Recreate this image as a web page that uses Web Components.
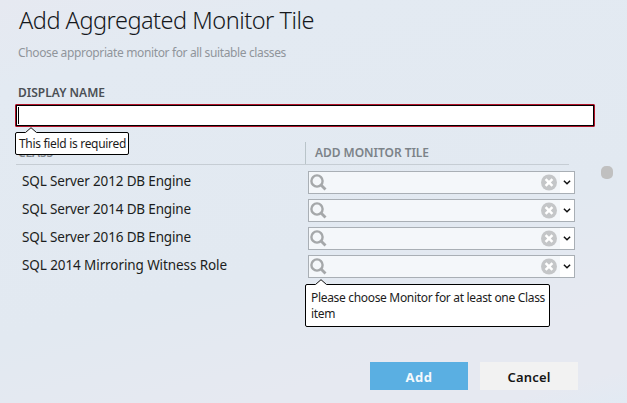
<!DOCTYPE html>
<html lang="en">
<head>
<meta charset="utf-8">
<title>Add Aggregated Monitor Tile</title>
<style>
html, body { margin: 0; height: 100%; overflow: hidden; }
body { font-family: "Noto Sans", "Open Sans", sans-serif; }
</style>
</head>
<body>
<monitor-dialog></monitor-dialog>
<script>
function mount(el, html) {
  const t = document.createElement('template');
  t.innerHTML = html;
  el.attachShadow({ mode: 'open' }).append(t.content.cloneNode(true));
}

/* One line of text, tracked so that it spans the given width. */
customElements.define('fit-text', class extends HTMLElement {
  constructor() {
    super();
    mount(this, `<style>:host{display:block;white-space:nowrap;height:var(--lh,16px);line-height:var(--lh,16px)}span{display:inline-block}</style><span><slot></slot></span>`);
  }
  connectedCallback() {
    const span = this.shadowRoot.querySelector('span');
    const goal = Number(this.getAttribute('span'));
    const n = this.textContent.length;
    span.style.letterSpacing = (goal - span.getBoundingClientRect().width) / n + 'px';
  }
});

/* White bubble with a small pointer on its top edge. */
customElements.define('error-tip', class extends HTMLElement {
  constructor() {
    super();
    mount(this, `<style>
      :host{display:block;position:absolute;box-sizing:border-box;background:#fff;border:1px solid #000;border-radius:2px;color:#1c1c1c;font-size:12px;z-index:2}
      svg{position:absolute;left:9px;top:-6px;display:block}
    </style><svg width="12" height="7" viewBox="0 0 12 7"><path d="M0 7 L0.5 5.5 L6 .7 L11.5 5.5 L12 7Z" fill="#fff"/><path d="M.5 5.5 L6 .7 L11.5 5.5" fill="none" stroke="#111"/></svg><slot></slot>`);
  }
});

customElements.define('text-field', class extends HTMLElement {
  constructor() {
    super();
    mount(this, `<style>
      :host{display:flex;box-sizing:border-box;width:580px;height:23px;border:1px solid #b01228;border-radius:1px;position:relative}
      .in{flex:1;border:1px solid #000;background:#fff;padding:1px}
      .caret{width:1px;height:17px;background:#000}
    </style><div class="in"><div class="caret"></div></div><slot></slot>`);
  }
});

customElements.define('monitor-picker', class extends HTMLElement {
  constructor() {
    super();
    mount(this, `<style>
      :host{display:flex;box-sizing:border-box;width:267px;height:23px;border:1px solid #a9afb5;background:#f4f7fa;align-items:center;position:relative}
      .lens{margin-left:1px}
      .gap{flex:1}
      .clear{margin-right:3px}
      .drop{width:14px;height:21px;background:#fff;display:flex;align-items:center;justify-content:center}
      .drop svg{margin-top:-1px}
      svg{display:block}
    </style>
    <svg class="lens" width="17" height="17" viewBox="0 0 17 17"><circle cx="7" cy="7" r="5.6" fill="none" stroke="#a5a8aa" stroke-width="2.4"/><path d="M11 11 L15.5 15.5" stroke="#a5a8aa" stroke-width="2.8"/></svg>
    <div class="gap"></div>
    <svg class="clear" width="16" height="17" viewBox="0 0 16 17"><circle cx="8" cy="8.5" r="8" fill="#c4c6c8"/><path d="M4.6 5.1 L11.4 11.9 M11.4 5.1 L4.6 11.9" stroke="#fff" stroke-width="2.5"/></svg>
    <div class="drop"><svg width="8" height="5" viewBox="0 0 8 5"><path d="M.9 .8 L4 3.7 L7.1 .8" fill="none" stroke="#111" stroke-width="1.5"/></svg></div>
    <slot></slot>`);
  }
});

customElements.define('class-row', class extends HTMLElement {
  constructor() {
    super();
    mount(this, `<style>
      :host{display:flex;height:23px;color:#1b1d20;font-size:13.5px}
      .name{width:286px;--lh:20px}
    </style><div class="name"><slot></slot></div><monitor-picker><slot name="tip"></slot></monitor-picker>`);
  }
});

customElements.define('dialog-button', class extends HTMLElement {
  constructor() {
    super();
    mount(this, `<style>
      :host{display:flex;width:98px;height:28px;align-items:center;justify-content:center;font-size:13px;font-weight:600;background:#f2f2f2;color:#161616;--lh:18px}
      :host([primary]){background:#5aafe2;color:#f3f9fd;font-weight:700}
      div{margin-top:2px}
    </style><div><slot></slot></div>`);
  }
});

customElements.define('monitor-dialog', class extends HTMLElement {
  constructor() {
    super();
    mount(this, `<style>
      :host{display:flex;flex-direction:column;box-sizing:border-box;width:627px;height:403px;padding:4px 0 0 15px;background:linear-gradient(165deg,#e6e9f1 0,#e3eaf2 16%,#e2e9f1 60%,#e6e9f1 82%,#e6e9f1 94%,#e2eaf3 100%)}
      .title{margin-left:4px;font-size:23.5px;font-weight:300;color:#15181c;--lh:32px}
      .sub{margin:9px 0 0 3px;font-size:12px;color:#90959b}
      .label{margin:23px 0 0 3px;font-size:12px;font-weight:600;color:#4b5055;--lh:17px}
      text-field{margin-top:3px}
      .area{display:flex;height:151px;margin-top:15px}
      .grid{width:560px}
      .head{display:flex;box-sizing:border-box;width:553px;height:23px;margin-left:1px;border-bottom:1px solid #c6cdd4;color:#7c8389;font-size:12px;font-weight:600}
      .c1{box-sizing:border-box;width:289px;padding:3px 0 0 2px}
      .c2{border-left:1px solid #b9c4c9;padding:3px 0 0 9px}
      .rows{display:grid;gap:5px;padding:6px 0 0 7px}
      .thumb{width:12px;height:13px;border-radius:5px;background:#c0c0c0;margin:24px 0 0 26px}
      .actions{display:flex;gap:12px;margin:69px 0 0 355px}
    </style>
    <fit-text class="title" span="295">Add Aggregated Monitor Tile</fit-text>
    <fit-text class="sub" span="268">Choose appropriate monitor for all suitable classes</fit-text>
    <fit-text class="label" span="87">DISPLAY NAME</fit-text>
    <text-field><error-tip style="left:-1px;top:27px;width:114px;height:23px;padding:3px 0 0 3px"><fit-text span="107">This field is required</fit-text></error-tip></text-field>
    <div class="area">
      <div class="grid">
        <div class="head"><div class="c1"><fit-text span="35">CLASS</fit-text></div><div class="c2"><fit-text span="114">ADD MONITOR TILE</fit-text></div></div>
        <div class="rows">
          <class-row><fit-text span="169">SQL Server 2012 DB Engine</fit-text></class-row>
          <class-row><fit-text span="169">SQL Server 2014 DB Engine</fit-text></class-row>
          <class-row><fit-text span="169">SQL Server 2016 DB Engine</fit-text></class-row>
          <class-row><fit-text span="205">SQL 2014 Mirroring Witness Role</fit-text>
            <error-tip slot="tip" style="left:-4px;top:28px;width:245px;height:43px;padding:5px 0 0 5px"><fit-text span="234">Please choose Monitor for at least one Class</fit-text><fit-text span="24">item</fit-text></error-tip>
          </class-row>
        </div>
      </div>
      <div class="thumb"></div>
    </div>
    <div class="actions"><dialog-button primary><fit-text span="27">Add</fit-text></dialog-button><dialog-button><fit-text span="43">Cancel</fit-text></dialog-button></div>`);
  }
});
</script>
</body>
</html>
